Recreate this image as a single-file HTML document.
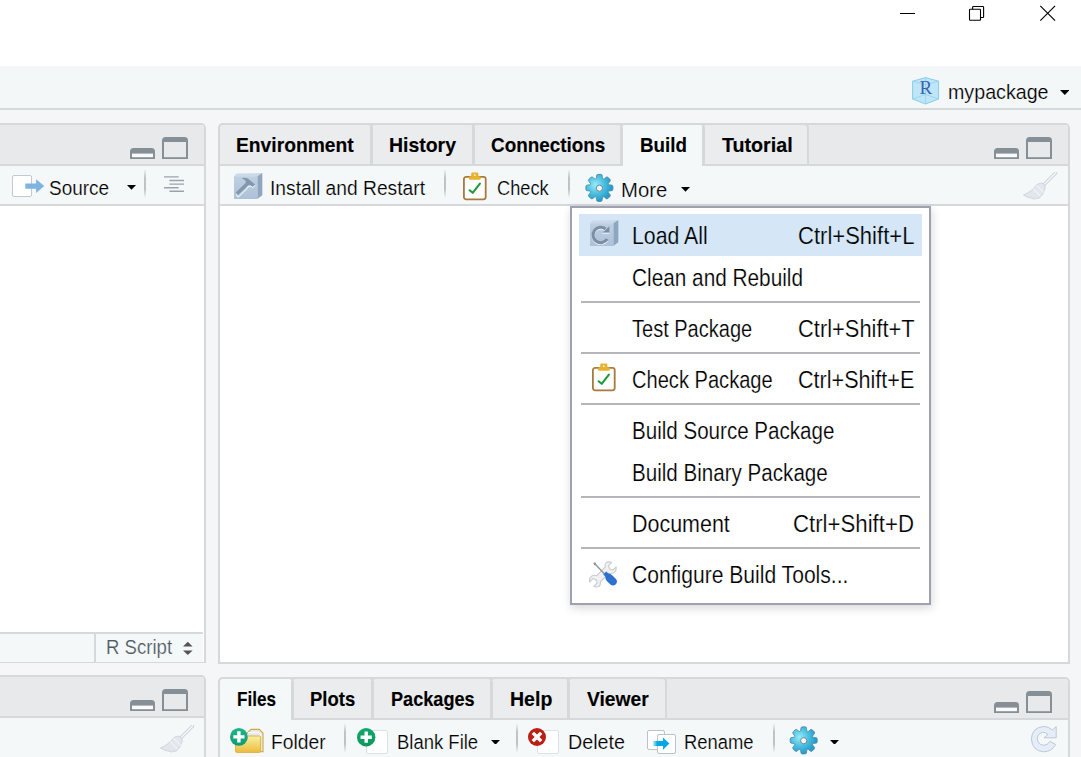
<!DOCTYPE html>
<html><head><meta charset="utf-8"><title>RStudio</title>
<style>

html,body{margin:0;padding:0}
body{width:1081px;height:757px;overflow:hidden;position:relative;background:#f5f6f7;font-family:"Liberation Sans",sans-serif}
div,span,svg{position:absolute;box-sizing:border-box}
.t{white-space:pre;line-height:normal;transform-origin:0 50%}
.titlebar{left:0;top:0;width:1081px;height:66px;background:#fff}
.apptb{left:0;top:66px;width:1081px;height:44px;background:#f4f7f8;border-bottom:2px solid #d5d9dc}
.pane{border:2px solid #d5d9dc;background:#fff;overflow:hidden}
.hdr{left:0;right:0;top:0;height:41px;background:#e8e9ea;border-bottom:2px solid #d5d9dc}
.tb{left:0;right:0;top:41px;height:40px;background:#f4f8f9;border-bottom:2px solid #d5d9dc}
.tab{height:43px;background:#ebeced;border:2px solid #d5d9dc;border-bottom:none;border-radius:5px 5px 0 0}
.tab.on{background:#f4f8f9}
.sep{width:2px;background:linear-gradient(to bottom,rgba(190,195,200,0),rgba(190,195,200,1) 30%,rgba(190,195,200,1) 70%,rgba(190,195,200,0))}
.menu{left:570px;top:206px;width:361px;height:399px;background:#fff;border:2px solid #9ea2b0;box-shadow:1px 3px 9px rgba(0,0,0,0.16)}
.mhl{left:579px;top:214px;width:343px;height:42px;background:#d5e7f7}
.msep{left:581px;width:339px;height:2px;background:#b4b6ba}

</style></head>
<body>
<div class="titlebar"></div>
<svg style="left:890px;top:0" width="191" height="30" viewBox="890 0 191 30" shape-rendering="crispEdges"><path d="M900 13.5H915" stroke="#000" stroke-width="1"/><g shape-rendering="auto" fill="none" stroke="#000" stroke-width="1.1"><rect x="969.5" y="9.3" width="11" height="11" rx="0.7"/><path d="M972.6 9.2V7.3Q972.6 6.5 973.4 6.5H982.8Q983.6 6.5 983.6 7.3V16.7Q983.6 17.5 982.8 17.5H980.7"/><path d="M1040.3 5.9L1055.1 20.7M1055.1 5.9L1040.3 20.7" stroke-width="1.15"/></g></svg>
<div class="apptb"></div>
<svg style="left:911.6px;top:76.6px" width="28" height="28" viewBox="0 0 28 28"><path d="M13.6 0.6L26.6 4.2V22L13.6 27L0.6 22V4.2Z" fill="#bfe6f8" stroke="#86cde8" stroke-width="1"/><path d="M0.6 4.2L13.6 7.6L26.6 4.2M13.6 7.6V27M0.6 22L13.6 17.4L26.6 22M13.6 0.6V17.4" fill="none" stroke="#8fd2ea" stroke-width="0.8"/><text x="13.9" y="17.3" font-family="Liberation Serif, serif" font-size="19" text-anchor="middle" fill="#3b62b4">R</text></svg>
<svg style="left:1059.6px;top:90.2px" width="9.6" height="5" viewBox="0 0 9.6 5"><path d="M0 0H9.6L4.8 5Z" fill="#000"/></svg>
<div class="pane" style="left:-20px;top:123px;width:226px;height:540px;border-radius:5px 5px 0 0;border-bottom-width:1px"><div class="hdr"></div><div class="tb"></div><div style="left:0;right:1px;top:507px;height:30px;background:#f4f8f9;border-top:2px solid #d5d9dc"></div><div style="left:112px;top:509px;width:2px;height:28px;background:#d5d9dc"></div></div>
<svg style="left:130px;top:137px" width="60" height="22" viewBox="0 0 60 22"><path d="M0 22V14.5Q0 11 3.5 11H21.5Q25 11 25 14.5V22Z" fill="#878f96"/><rect x="2" y="16.6" width="21" height="3.6" fill="#fafafa"/><path d="M32 22V3.5Q32 0 35.5 0H54.5Q58 0 58 3.5V22Z" fill="#878f96"/><rect x="34" y="5" width="22" height="15.2" fill="#e8e9ea"/></svg>
<div style="left:11.6px;top:175.2px;width:20.4px;height:21.8px;background:#fff;border:1.4px solid #c3c8d2;border-radius:2px"></div>
<svg style="left:24px;top:178px" width="22" height="16" viewBox="24 178 22 16"><path d="M25.3 183.6H36.1V179.2L44.3 186.1L36.1 193V188.8H25.3Z" fill="#7fb3e1"/></svg>
<svg style="left:127px;top:185.2px" width="9" height="4.7" viewBox="0 0 9 4.7"><path d="M0 0H9L4.5 4.7Z" fill="#000"/></svg>
<div class="sep" style="left:144px;top:169px;height:29px"></div>
<svg style="left:160px;top:174px" width="28" height="20" viewBox="160 174 28 20"><path d="M164 176.9H178.7M169.4 180.5H184M169.4 184.1H184M164 187.7H178.7M169.4 191.2H184" stroke="#9aa3ad" stroke-width="1.4"/></svg>
<svg style="left:182px;top:641px" width="12" height="15" viewBox="0 0 12 15"><path d="M1 5.4L5.8 0.8L10.6 5.4Z" fill="#555"/><path d="M1 9.4L5.8 14L10.6 9.4Z" fill="#555"/></svg>
<div class="pane" style="left:218px;top:123px;width:852px;height:541px;border-radius:5px 5px 0 0"><div class="hdr"></div><div class="tb"></div></div>
<div class="tab" style="left:218px;top:123px;width:155px;height:41px"></div>
<div class="tab" style="left:370px;top:123px;width:105px;height:41px"></div>
<div class="tab" style="left:472px;top:123px;width:151px;height:41px"></div>
<div class="tab on" style="left:620px;top:123px;width:85px;height:43px"></div>
<div class="tab" style="left:702px;top:123px;width:107px;height:41px"></div>
<div style="left:370px;top:127px;width:3px;height:39px;background:#d5d9dc"></div>
<div style="left:472px;top:127px;width:3px;height:39px;background:#d5d9dc"></div>
<div style="left:620px;top:127px;width:3px;height:39px;background:#d5d9dc"></div>
<div style="left:702px;top:127px;width:3px;height:39px;background:#d5d9dc"></div>
<svg style="left:994px;top:137px" width="60" height="22" viewBox="0 0 60 22"><path d="M0 22V14.5Q0 11 3.5 11H21.5Q25 11 25 14.5V22Z" fill="#878f96"/><rect x="2" y="16.6" width="21" height="3.6" fill="#fafafa"/><path d="M32 22V3.5Q32 0 35.5 0H54.5Q58 0 58 3.5V22Z" fill="#878f96"/><rect x="34" y="5" width="22" height="15.2" fill="#e8e9ea"/></svg>
<svg style="left:233.9px;top:172.9px" width="30" height="28" viewBox="0 0 30 28"><defs><linearGradient id="cf233172" x1="0" y1="0" x2="0" y2="1"><stop offset="0" stop-color="#bfd0e2"/><stop offset="1" stop-color="#acc1d8"/></linearGradient></defs><path d="M0 3.2L2.6 0.6L28.3 0L23.3 3.2Z" fill="#ccd9e8"/><path d="M23.3 3.2L28.3 0V22.3L23.3 26Z" fill="#8fa6c0"/><rect x="0" y="3.2" width="23.3" height="22.8" fill="url(#cf233172)"/><path d="M2 21.6L4.2 24L12.5 16.2L14.2 13.6L17 13.2L19 14.4L21 12.2" fill="none" stroke="#e9f0f7" stroke-width="1.1"/><path d="M7.6 5.2Q11 4.2 13.8 5.6L21.2 11.4L18.6 13.8L16.6 12.2Q15.2 11.4 14 12.4L4.2 21.8L1.8 19.4L11.6 10Q12.4 8.2 10.8 7L7.6 5.2Z" fill="#8397ac"/></svg>
<div class="sep" style="left:444px;top:169px;height:29px"></div>
<svg style="left:462.3px;top:171.1px" width="26" height="31" viewBox="-1 -5 26 31"><rect x="0.9" y="0.9" width="21.8" height="22.4" rx="2.2" fill="#fff" stroke="#a87a3c" stroke-width="1.8"/><path d="M8.2 0.2V-2.2Q8.2 -3.4 9.4 -3.4H14.2Q15.4 -3.4 15.4 -2.2V0.2H16.3Q17.8 0.2 17.8 1.7V2.3Q17.8 3.8 16.3 3.8H7.3Q5.8 3.8 5.8 2.3V1.7Q5.8 0.2 7.3 0.2Z" fill="#e8b22e"/><circle cx="11.8" cy="-0.9" r="0.9" fill="#fff"/><path d="M6.6 14.3L9.7 16.8L16.9 7.6" fill="none" stroke="#1f9a3a" stroke-width="2.1" stroke-linecap="round" stroke-linejoin="round"/></svg>
<div class="sep" style="left:568px;top:169px;height:29px"></div>
<svg style="left:0;top:0" width="1081" height="757" viewBox="0 0 1081 757"><defs><radialGradient id="g599" gradientUnits="userSpaceOnUse" cx="595.4" cy="184.9" r="16"><stop offset="0" stop-color="#98ecf8"/><stop offset="0.55" stop-color="#4cc0e0"/><stop offset="1" stop-color="#2a9ccb"/></radialGradient></defs><path d="M596.25 178.41L596.55 176.24Q596.28 174.56 598.04 174.37L600.76 174.37Q602.52 174.56 602.25 176.24L602.55 178.41Q602.88 179.49 603.89 178.96L605.63 177.64Q606.62 176.26 608.01 177.37L609.93 179.29Q611.04 180.68 609.66 181.67L608.34 183.41Q607.81 184.42 608.89 184.75L611.06 185.05Q612.74 184.78 612.93 186.54L612.93 189.26Q612.74 191.02 611.06 190.75L608.89 191.05Q607.81 191.38 608.34 192.39L609.66 194.13Q611.04 195.12 609.93 196.51L608.01 198.43Q606.62 199.54 605.63 198.16L603.89 196.84Q602.88 196.31 602.55 197.39L602.25 199.56Q602.52 201.24 600.76 201.43L598.04 201.43Q596.28 201.24 596.55 199.56L596.25 197.39Q595.92 196.31 594.91 196.84L593.17 198.16Q592.18 199.54 590.79 198.43L588.87 196.51Q587.76 195.12 589.14 194.13L590.46 192.39Q590.99 191.38 589.91 191.05L587.74 190.75Q586.06 191.02 585.87 189.26L585.87 186.54Q586.06 184.78 587.74 185.05L589.91 184.75Q590.99 184.42 590.46 183.41L589.14 181.67Q587.76 180.68 588.87 179.29L590.79 177.37Q592.18 176.26 593.17 177.64L594.91 178.96Q595.92 179.49 596.25 178.41Z" fill="url(#g599)" stroke="#4688a6" stroke-width="0.8" stroke-linejoin="round"/><circle cx="599.4" cy="188.20000000000002" r="3.1" fill="#f4f8f9" stroke="#6d8796" stroke-width="1"/></svg>
<svg style="left:680.6px;top:187.4px" width="9" height="4.7" viewBox="0 0 9 4.7"><path d="M0 0H9L4.5 4.7Z" fill="#000"/></svg>
<svg style="left:1023px;top:172.2px" width="35" height="29" viewBox="0 0 35 29"><path d="M32.6 1L21.6 12" stroke="#cbd2da" stroke-width="3.3" stroke-linecap="round"/><path d="M32.6 1L21.6 12" stroke="#f3f6f9" stroke-width="1.7" stroke-linecap="round"/><path d="M20.4 11.4Q22.6 13.6 22.1 16.6Q20.6 22.6 16.2 26.2L13 26.2L11.8 27.2L9 26.2L4.6 25.2L0.5 23Q9.6 19 13.8 12.6Q17.4 10.6 20.4 11.4Z" fill="#e2e7ed" stroke="#ccd3db" stroke-width="0.9"/><path d="M13.4 13.2L20.8 20.4M10.2 16.6L17.4 24" stroke="#f1f4f7" stroke-width="1.1"/></svg>
<div class="pane" style="left:-20px;top:675px;width:226px;height:120px;border-radius:5px 5px 0 0;background:#f4f8f9"><div class="hdr"></div></div>
<svg style="left:130px;top:689px" width="60" height="22" viewBox="0 0 60 22"><path d="M0 22V14.5Q0 11 3.5 11H21.5Q25 11 25 14.5V22Z" fill="#878f96"/><rect x="2" y="16.6" width="21" height="3.6" fill="#fafafa"/><path d="M32 22V3.5Q32 0 35.5 0H54.5Q58 0 58 3.5V22Z" fill="#878f96"/><rect x="34" y="5" width="22" height="15.2" fill="#e8e9ea"/></svg>
<svg style="left:159.6px;top:724.6px" width="35" height="29" viewBox="0 0 35 29"><path d="M32.6 1L21.6 12" stroke="#cbd2da" stroke-width="3.3" stroke-linecap="round"/><path d="M32.6 1L21.6 12" stroke="#f3f6f9" stroke-width="1.7" stroke-linecap="round"/><path d="M20.4 11.4Q22.6 13.6 22.1 16.6Q20.6 22.6 16.2 26.2L13 26.2L11.8 27.2L9 26.2L4.6 25.2L0.5 23Q9.6 19 13.8 12.6Q17.4 10.6 20.4 11.4Z" fill="#e2e7ed" stroke="#ccd3db" stroke-width="0.9"/><path d="M13.4 13.2L20.8 20.4M10.2 16.6L17.4 24" stroke="#f1f4f7" stroke-width="1.1"/></svg>
<div class="pane" style="left:218px;top:677px;width:852px;height:120px;border-radius:5px 5px 0 0;background:#f4f8f9"><div class="hdr"></div></div>
<div class="tab on" style="left:218px;top:677px;width:76px;height:43px"></div>
<div class="tab" style="left:291px;top:677px;width:83px;height:41px"></div>
<div class="tab" style="left:371px;top:677px;width:122px;height:41px"></div>
<div class="tab" style="left:490px;top:677px;width:80px;height:41px"></div>
<div class="tab" style="left:567px;top:677px;width:100px;height:41px"></div>
<div style="left:291px;top:681px;width:3px;height:39px;background:#d5d9dc"></div>
<div style="left:371px;top:681px;width:3px;height:39px;background:#d5d9dc"></div>
<div style="left:490px;top:681px;width:3px;height:39px;background:#d5d9dc"></div>
<div style="left:567px;top:681px;width:3px;height:39px;background:#d5d9dc"></div>
<svg style="left:994px;top:691px" width="60" height="22" viewBox="0 0 60 22"><path d="M0 22V14.5Q0 11 3.5 11H21.5Q25 11 25 14.5V22Z" fill="#878f96"/><rect x="2" y="16.6" width="21" height="3.6" fill="#fafafa"/><path d="M32 22V3.5Q32 0 35.5 0H54.5Q58 0 58 3.5V22Z" fill="#878f96"/><rect x="34" y="5" width="22" height="15.2" fill="#e8e9ea"/></svg>
<svg style="left:235px;top:728.2px" width="30" height="26" viewBox="-12 -1 30 26"><defs><linearGradient id="ff" x1="0" y1="0" x2="0" y2="1"><stop offset="0" stop-color="#faf0a4"/><stop offset="1" stop-color="#edbc3a"/></linearGradient></defs><path d="M-3 7.2L4 0.4H12.4L16 4V22.6H13.6" fill="#e7e9eb" stroke="#cdaa3e" stroke-width="1.1"/><path d="M13.6 22.6V5.4L11.6 3.6H1" fill="none" stroke="#fff" stroke-width="1"/><rect x="-11.4" y="7" width="25" height="16.4" rx="1.2" fill="url(#ff)" stroke="#d9b545" stroke-width="1"/></svg>
<svg style="left:229.0px;top:727.3000000000001px" width="19.8" height="19.8" viewBox="-9.9 -9.9 19.8 19.8"><defs><linearGradient id="pc238" x1="0" y1="0" x2="0" y2="1"><stop offset="0" stop-color="#1fb68c"/><stop offset="1" stop-color="#0f9a72"/></linearGradient></defs><circle r="8.9" fill="url(#pc238)"/><path d="M-1.7 -5.6H1.7V-1.7H5.6V1.7H1.7V5.6H-1.7V1.7H-5.6V-1.7H-1.7Z" fill="#fff"/></svg>
<div class="sep" style="left:344px;top:723px;height:30px"></div>
<div style="left:366.2px;top:730px;width:21.8px;height:23.5px;background:#fff;border:1.4px solid #dde2ea;border-radius:2px"></div>
<svg style="left:356.0px;top:727.0999999999999px" width="20.4" height="20.4" viewBox="-10.2 -10.2 20.4 20.4"><defs><linearGradient id="pc366" x1="0" y1="0" x2="0" y2="1"><stop offset="0" stop-color="#12a86b"/><stop offset="1" stop-color="#0c985e"/></linearGradient></defs><circle r="9.2" fill="url(#pc366)"/><path d="M-1.7 -5.6H1.7V-1.7H5.6V1.7H1.7V5.6H-1.7V1.7H-5.6V-1.7H-1.7Z" fill="#fff"/></svg>
<svg style="left:491.2px;top:739.8px" width="9" height="4.7" viewBox="0 0 9 4.7"><path d="M0 0H9L4.5 4.7Z" fill="#000"/></svg>
<div class="sep" style="left:516px;top:723px;height:30px"></div>
<div style="left:537px;top:730px;width:21.8px;height:23.5px;background:#fff;border:1.4px solid #dde2ea;border-radius:2px"></div>
<svg style="left:527.1px;top:727.3px" width="20" height="20" viewBox="-10 -10 20 20"><circle r="9" fill="#b92014"/><path d="M-1.7 -5.9H1.7V-1.7H5.9V1.7H1.7V5.9H-1.7V1.7H-5.9V-1.7H-1.7Z" fill="#fff" transform="rotate(45)"/></svg>
<div style="left:646.5px;top:730.2px;width:18.6px;height:19.8px;background:#fff;border:1.4px solid #bcc1cb;border-radius:2px"></div>
<div style="left:657.2px;top:734.2px;width:18.6px;height:19.6px;background:#fff;border:1.4px solid #bcc1cb;border-radius:2px"></div>
<svg style="left:652px;top:736px" width="19" height="15" viewBox="652 736 19 15"><defs><linearGradient id="ra" x1="0" x2="1"><stop offset="0" stop-color="#00a8e8" stop-opacity="0.2"/><stop offset="0.25" stop-color="#00a8e8"/></linearGradient></defs><path d="M653 741.1H663V737.4L669.4 743.6L663 749.8V746H653Z" fill="url(#ra)"/></svg>
<div class="sep" style="left:773px;top:723px;height:30px"></div>
<svg style="left:0;top:0" width="1081" height="757" viewBox="0 0 1081 757"><defs><radialGradient id="g803" gradientUnits="userSpaceOnUse" cx="799.7" cy="737.4" r="16"><stop offset="0" stop-color="#98ecf8"/><stop offset="0.55" stop-color="#4cc0e0"/><stop offset="1" stop-color="#2a9ccb"/></radialGradient></defs><path d="M800.55 730.91L800.85 728.74Q800.58 727.06 802.34 726.87L805.06 726.87Q806.82 727.06 806.55 728.74L806.85 730.91Q807.18 731.99 808.19 731.46L809.93 730.14Q810.92 728.76 812.31 729.87L814.23 731.79Q815.34 733.18 813.96 734.17L812.64 735.91Q812.11 736.92 813.19 737.25L815.36 737.55Q817.04 737.28 817.23 739.04L817.23 741.76Q817.04 743.52 815.36 743.25L813.19 743.55Q812.11 743.88 812.64 744.89L813.96 746.63Q815.34 747.62 814.23 749.01L812.31 750.93Q810.92 752.04 809.93 750.66L808.19 749.34Q807.18 748.81 806.85 749.89L806.55 752.06Q806.82 753.74 805.06 753.93L802.34 753.93Q800.58 753.74 800.85 752.06L800.55 749.89Q800.22 748.81 799.21 749.34L797.47 750.66Q796.48 752.04 795.09 750.93L793.17 749.01Q792.06 747.62 793.44 746.63L794.76 744.89Q795.29 743.88 794.21 743.55L792.04 743.25Q790.36 743.52 790.17 741.76L790.17 739.04Q790.36 737.28 792.04 737.55L794.21 737.25Q795.29 736.92 794.76 735.91L793.44 734.17Q792.06 733.18 793.17 731.79L795.09 729.87Q796.48 728.76 797.47 730.14L799.21 731.46Q800.22 731.99 800.55 730.91Z" fill="url(#g803)" stroke="#4688a6" stroke-width="0.8" stroke-linejoin="round"/><circle cx="803.7" cy="740.6999999999999" r="3.1" fill="#f4f8f9" stroke="#6d8796" stroke-width="1"/></svg>
<svg style="left:830.2px;top:739.6px" width="9" height="4.7" viewBox="0 0 9 4.7"><path d="M0 0H9L4.5 4.7Z" fill="#000"/></svg>
<svg style="left:1030.8px;top:726px" width="28" height="27" viewBox="0 0 28 27"><path d="M25.2 0.6V11.8H13L16.8 8.4Q14.6 6 11.6 6.4Q6.6 7.2 6.4 12.8Q6.6 18.2 12 19.2Q16.6 19.4 18.8 15.4L24.6 18.4Q21 25.6 12.6 25.8Q1.2 25 0.4 13Q0.8 1.6 12.6 0.4Q17.8 0.6 21.4 4Z" fill="#e5edf8" stroke="#b9c1d1" stroke-width="0.9" stroke-linejoin="round"/></svg>
<div class="menu"></div><div class="mhl"></div>
<div class="msep" style="top:301px"></div>
<div class="msep" style="top:352px"></div>
<div class="msep" style="top:403px"></div>
<div class="msep" style="top:496px"></div>
<div class="msep" style="top:547px"></div>
<svg style="left:590px;top:220.1px" width="30" height="28" viewBox="0 0 30 28"><defs><linearGradient id="cf590220" x1="0" y1="0" x2="0" y2="1"><stop offset="0" stop-color="#bfd0e2"/><stop offset="1" stop-color="#acc1d8"/></linearGradient></defs><path d="M0 3.2L2.6 0.6L28.3 0L23.3 3.2Z" fill="#ccd9e8"/><path d="M23.3 3.2L28.3 0V22.3L23.3 26Z" fill="#8fa6c0"/><rect x="0" y="3.2" width="23.3" height="22.8" fill="url(#cf590220)"/><path d="M16.9 19.3A7.7 7.7 0 1 1 15.55 9" fill="none" stroke="#e6eef6" stroke-width="3" transform="translate(0,1)"/><path d="M17.2 19.0A7.7 7.7 0 1 1 15.55 9" fill="none" stroke="#7b8ea3" stroke-width="3"/><path d="M19.4 6.2V12.7H12.4Z" fill="#7b8ea3"/><rect x="12.4" y="12.7" width="7" height="1.1" fill="#e9f0f7"/></svg>
<svg style="left:591px;top:362px" width="26" height="31" viewBox="-1 -5 26 31"><rect x="0.9" y="0.9" width="21.8" height="22.4" rx="2.2" fill="#fff" stroke="#a87a3c" stroke-width="1.8"/><path d="M8.2 0.2V-2.2Q8.2 -3.4 9.4 -3.4H14.2Q15.4 -3.4 15.4 -2.2V0.2H16.3Q17.8 0.2 17.8 1.7V2.3Q17.8 3.8 16.3 3.8H7.3Q5.8 3.8 5.8 2.3V1.7Q5.8 0.2 7.3 0.2Z" fill="#e8b22e"/><circle cx="11.8" cy="-0.9" r="0.9" fill="#fff"/><path d="M6.6 14.3L9.7 16.8L16.9 7.6" fill="none" stroke="#1f9a3a" stroke-width="2.1" stroke-linecap="round" stroke-linejoin="round"/></svg>
<svg style="left:589.2px;top:561.2px" width="29" height="27" viewBox="0 0 29 27"><path d="M17.2 1.6Q20.4 0.2 22.6 1.6L19.4 4.8L20.6 8L23.8 9.2L27 6Q27.8 9 25.6 11.2Q23.2 13.2 20 12.2L11.2 21Q12 24.2 9.6 25.6Q7 26.6 5 25.2L8.2 22L7 18.8L3.8 17.6L0.6 20.8Q-0.2 17.6 2 15.6Q4.4 13.6 7.6 14.6L16.4 5.8Q15.4 3 17.2 1.6Z" fill="#f0f1f2" stroke="#c9cbce" stroke-width="1.1"/><path d="M5.4 2.2L15 12.4" stroke="#8f9296" stroke-width="1.4"/><path d="M4.2 2.4L6 1L7.4 3.2L5.8 4.4Z" fill="#8f9296"/><path d="M14.2 13.2L17.2 10.4L19.4 12.6Q21.6 12.6 23.4 14.4L27.2 18.2Q29 21 26.6 23.4Q24.2 25.6 21.4 23.6L17.8 20Q16.2 18.2 16.2 15.4Z" fill="#2f6fd0"/></svg>
<span class="t" style="left:947.95px;top:80.80px;font-size:19.8px;font-weight:normal;color:#000;-webkit-text-stroke:0.2px #f4f8f9;transform:scaleX(0.9937)">mypackage</span>
<span class="t" style="left:48.81px;top:177.00px;font-size:20px;font-weight:normal;color:#000;-webkit-text-stroke:0.2px #f4f8f9;transform:scaleX(0.9487)">Source</span>
<span class="t" style="left:105.92px;top:635.70px;font-size:19.5px;font-weight:normal;color:#4d5960;-webkit-text-stroke:0.2px #f4f8f9;transform:scaleX(0.9523)">R Script</span>
<span class="t" style="left:236.40px;top:132.80px;font-size:20.5px;font-weight:bold;color:#000;-webkit-text-stroke:0.15px #000;transform:scaleX(0.9390)">Environment</span>
<span class="t" style="left:388.65px;top:132.80px;font-size:20.5px;font-weight:bold;color:#000;-webkit-text-stroke:0.15px #000;transform:scaleX(0.9486)">History</span>
<span class="t" style="left:491.25px;top:132.80px;font-size:20.5px;font-weight:bold;color:#000;-webkit-text-stroke:0.15px #000;transform:scaleX(0.9208)">Connections</span>
<span class="t" style="left:639.98px;top:132.80px;font-size:20.5px;font-weight:bold;color:#000;-webkit-text-stroke:0.15px #000;transform:scaleX(0.9151)">Build</span>
<span class="t" style="left:721.57px;top:132.80px;font-size:20.5px;font-weight:bold;color:#000;-webkit-text-stroke:0.15px #000;transform:scaleX(0.9588)">Tutorial</span>
<span class="t" style="left:270.16px;top:177.00px;font-size:20px;font-weight:normal;color:#000;-webkit-text-stroke:0.2px #f4f8f9;transform:scaleX(0.9615)">Install and Restart</span>
<span class="t" style="left:496.89px;top:177.00px;font-size:20px;font-weight:normal;color:#000;-webkit-text-stroke:0.2px #f4f8f9;transform:scaleX(0.9116)">Check</span>
<span class="t" style="left:620.97px;top:178.60px;font-size:20px;font-weight:normal;color:#000;-webkit-text-stroke:0.2px #f4f8f9;transform:scaleX(1.0141)">More</span>
<span class="t" style="left:236.95px;top:686.60px;font-size:20.5px;font-weight:bold;color:#000;-webkit-text-stroke:0.15px #000;transform:scaleX(0.8354)">Files</span>
<span class="t" style="left:310.35px;top:686.60px;font-size:20.5px;font-weight:bold;color:#000;-webkit-text-stroke:0.15px #000;transform:scaleX(0.9011)">Plots</span>
<span class="t" style="left:391.28px;top:686.60px;font-size:20.5px;font-weight:bold;color:#000;-webkit-text-stroke:0.15px #000;transform:scaleX(0.8839)">Packages</span>
<span class="t" style="left:509.91px;top:686.60px;font-size:20.5px;font-weight:bold;color:#000;-webkit-text-stroke:0.15px #000;transform:scaleX(0.9534)">Help</span>
<span class="t" style="left:587.08px;top:686.60px;font-size:20.5px;font-weight:bold;color:#000;-webkit-text-stroke:0.15px #000;transform:scaleX(0.9391)">Viewer</span>
<span class="t" style="left:270.85px;top:731.00px;font-size:20px;font-weight:normal;color:#000;-webkit-text-stroke:0.2px #f4f8f9;transform:scaleX(0.9627)">Folder</span>
<span class="t" style="left:396.59px;top:731.00px;font-size:20px;font-weight:normal;color:#000;-webkit-text-stroke:0.2px #f4f8f9;transform:scaleX(0.9241)">Blank File</span>
<span class="t" style="left:567.73px;top:731.00px;font-size:20px;font-weight:normal;color:#000;-webkit-text-stroke:0.2px #f4f8f9;transform:scaleX(0.9855)">Delete</span>
<span class="t" style="left:683.98px;top:731.00px;font-size:20px;font-weight:normal;color:#000;-webkit-text-stroke:0.2px #f4f8f9;transform:scaleX(0.9197)">Rename</span>
<span class="t" style="left:631.85px;top:223.00px;font-size:23px;font-weight:normal;color:#000;-webkit-text-stroke:0.2px #d5e7f7;transform:scaleX(0.9251)">Load All</span>
<span class="t" style="left:797.53px;top:223.00px;font-size:23px;font-weight:normal;color:#000;-webkit-text-stroke:0.2px #d5e7f7;transform:scaleX(0.9584)">Ctrl+Shift+L</span>
<span class="t" style="left:631.67px;top:265.00px;font-size:23px;font-weight:normal;color:#000;-webkit-text-stroke:0.2px #fff;transform:scaleX(0.9037)">Clean and Rebuild</span>
<span class="t" style="left:632.17px;top:316.00px;font-size:23px;font-weight:normal;color:#000;-webkit-text-stroke:0.2px #fff;transform:scaleX(0.8703)">Test Package</span>
<span class="t" style="left:797.61px;top:316.00px;font-size:23px;font-weight:normal;color:#000;-webkit-text-stroke:0.2px #fff;transform:scaleX(0.9514)">Ctrl+Shift+T</span>
<span class="t" style="left:632.18px;top:367.00px;font-size:23px;font-weight:normal;color:#000;-webkit-text-stroke:0.2px #fff;transform:scaleX(0.8734)">Check Package</span>
<span class="t" style="left:797.62px;top:367.00px;font-size:23px;font-weight:normal;color:#000;-webkit-text-stroke:0.2px #fff;transform:scaleX(0.9384)">Ctrl+Shift+E</span>
<span class="t" style="left:631.83px;top:418.00px;font-size:23px;font-weight:normal;color:#000;-webkit-text-stroke:0.2px #fff;transform:scaleX(0.8943)">Build Source Package</span>
<span class="t" style="left:631.81px;top:460.00px;font-size:23px;font-weight:normal;color:#000;-webkit-text-stroke:0.2px #fff;transform:scaleX(0.8954)">Build Binary Package</span>
<span class="t" style="left:631.81px;top:511.00px;font-size:23px;font-weight:normal;color:#000;-webkit-text-stroke:0.2px #fff;transform:scaleX(0.9333)">Document</span>
<span class="t" style="left:792.91px;top:511.00px;font-size:23px;font-weight:normal;color:#000;-webkit-text-stroke:0.2px #fff;transform:scaleX(0.9658)">Ctrl+Shift+D</span>
<span class="t" style="left:632.25px;top:562.00px;font-size:23px;font-weight:normal;color:#000;-webkit-text-stroke:0.2px #fff;transform:scaleX(0.9166)">Configure Build Tools...</span>
</body></html>
